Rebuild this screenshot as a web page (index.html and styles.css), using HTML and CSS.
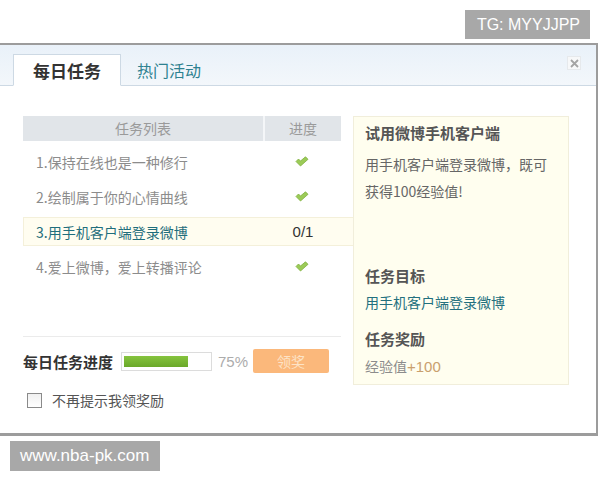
FILE: index.html
```html
<!DOCTYPE html>
<html lang="zh-CN">
<head>
<meta charset="utf-8">
<title>每日任务</title>
<link rel="stylesheet" href="styles.css">
</head>
<body>
<div class="top">
  <div class="tag">TG: MYYJJPP</div>
</div>
<div class="dialog">
  <div class="head">
    <div class="tab active">每日任务</div>
    <div class="tab">热门活动</div>
    <div class="close">
      <svg width="9" height="9" viewBox="0 0 9 9"><path d="M1 1 L8 8 M8 1 L1 8" stroke="#a4a4a4" stroke-width="1.8" fill="none"/></svg>
    </div>
  </div>
  <div class="body">
    <div class="left">
      <div class="thead">
        <div class="c-name">任务列表</div>
        <div class="c-prog">进度</div>
      </div>
      <div class="row">
        <div class="c-name">1.保持在线也是一种修行</div>
        <div class="c-prog"><svg class="ok" width="14" height="11" viewBox="0 0 14 11"><path d="M1 5.5 L3.5 3 L5.5 5 L10.5 0.8 L13 3.3 L5.5 10 Z" fill="#9bcb57" stroke="#7fae3d" stroke-width="0.8" stroke-linejoin="round"/></svg></div>
      </div>
      <div class="row">
        <div class="c-name">2.绘制属于你的心情曲线</div>
        <div class="c-prog"><svg class="ok" width="14" height="11" viewBox="0 0 14 11"><path d="M1 5.5 L3.5 3 L5.5 5 L10.5 0.8 L13 3.3 L5.5 10 Z" fill="#9bcb57" stroke="#7fae3d" stroke-width="0.8" stroke-linejoin="round"/></svg></div>
      </div>
      <div class="row current">
        <div class="c-name">3.用手机客户端登录微博</div>
        <div class="c-prog count">0/1</div>
      </div>
      <div class="row">
        <div class="c-name">4.爱上微博，爱上转播评论</div>
        <div class="c-prog"><svg class="ok" width="14" height="11" viewBox="0 0 14 11"><path d="M1 5.5 L3.5 3 L5.5 5 L10.5 0.8 L13 3.3 L5.5 10 Z" fill="#9bcb57" stroke="#7fae3d" stroke-width="0.8" stroke-linejoin="round"/></svg></div>
      </div>
      <div class="sep"></div>
      <div class="progress">
        <span class="plabel">每日任务进度</span>
        <div class="bar"><div class="fill" style="width:75%"></div></div>
        <span class="pct">75%</span>
        <div class="btn">领奖</div>
      </div>
      <label class="opt">
        <span class="box"></span>
        <span>不再提示我领奖励</span>
      </label>
    </div>
    <div class="panel">
      <div class="ptitle">试用微博手机客户端</div>
      <div class="pdesc">用手机客户端登录微博，既可<br>获得100经验值!</div>
      <div class="phead goal">任务目标</div>
      <div class="plink">用手机客户端登录微博</div>
      <div class="phead reward">任务奖励</div>
      <div class="ptext">经验值<span class="plus">+100</span></div>
    </div>
  </div>
</div>
<div class="bottom">
  <div class="tag site">www.nba-pk.com</div>
</div>
</body>
</html>
```
FILE: styles.css
```css
html, body {
  margin: 0;
  padding: 0;
  background: #fff;
}
body {
  width: 600px;
  height: 480px;
  overflow: hidden;
  font-family: "Noto Sans CJK SC", "Liberation Sans", sans-serif;
  color: #666;
}
.top {
  height: 43px;
  display: flex;
  justify-content: flex-end;
  align-items: flex-start;
  padding-right: 10px;
}
.tag {
  margin-top: 10px;
  background: #a8a8a8;
  color: #fff;
  font-family: "Liberation Sans", Arial, sans-serif;
  font-size: 16px;
  height: 29px;
  line-height: 29px;
  padding: 0 10px 0 12px;
}
.dialog {
  margin-left: -2px;
  width: 596px;
  height: 388px;
  border: 2px solid #9c9c9c;
  border-bottom-width: 3px;
  background: #fff;
}
.head {
  height: 40px;
  border-bottom: 1px solid #cdd9e4;
  background: linear-gradient(#e9f1f9, #f3f7fb);
  display: flex;
  align-items: flex-end;
  padding-left: 13px;
}
.tab {
  height: 32px;
  line-height: 32px;
  margin-bottom: -1px;
  font-size: 16px;
  color: #2e8190;
  padding: 0 17px 0 16px;
}
.tab.active {
  width: 108px;
  box-sizing: border-box;
  padding: 0;
  text-align: center;
  background: #fff;
  border: 1px solid #cdd9e4;
  border-bottom-color: #fff;
  font-weight: bold;
  color: #333;
  font-size: 17px;
}
.close {
  align-self: flex-start;
  margin: 11px 15px 0 auto;
  width: 14px;
  height: 14px;
  box-sizing: border-box;
  border: 1px solid #e6e9ec;
  background: #f7f8f9;
  display: flex;
  align-items: center;
  justify-content: center;
}
.body {
  display: flex;
  padding: 30px 0 0 23px;
}
.left {
  width: 330px;
  font-size: 14px;
}
.thead {
  width: 318px;
  height: 25px;
  display: grid;
  grid-template-columns: 240px 78px;
  background: #e1e5e9;
  color: #9a9a9a;
  line-height: 25px;
  text-align: center;
}
.thead .c-prog {
  border-left: 2px solid #f4f6f8;
}
.row {
  height: 29px;
  margin-top: 6px;
  display: grid;
  grid-template-columns: 240px 78px;
  align-items: center;
  color: #8c8c8c;
  box-sizing: border-box;
}
.row .c-name {
  padding-left: 13px;
}
.row .c-prog {
  display: flex;
  justify-content: center;
  align-items: center;
}
.row.current {
  width: 330px;
  background: #fffdf0;
  border: 1px solid #f4f0da;
  border-right: none;
  color: #1f6e7c;
}
.row.current .c-name {
  padding-left: 12px;
}
.count {
  color: #333;
  font-family: "Liberation Sans", Arial, sans-serif;
  font-size: 15px;
}
.sep {
  width: 318px;
  height: 1px;
  background: #ebebeb;
  margin-top: 55px;
}
.progress {
  margin-top: 12px;
  height: 24px;
  display: flex;
  align-items: center;
}
.plabel {
  font-weight: bold;
  color: #333;
  font-size: 15px;
  width: 98px;
}
.bar {
  width: 91px;
  height: 19px;
  box-sizing: border-box;
  border: 1px solid #dcdcdc;
  padding: 3px 2px;
  background: #fff;
}
.fill {
  height: 11px;
  max-width: 65px;
  background: linear-gradient(#86c43e, #6aa82a);
}
.pct {
  font-family: "Liberation Sans", Arial, sans-serif;
  color: #acacac;
  font-size: 15px;
  margin-left: 6px;
  width: 35px;
}
.btn {
  width: 76px;
  height: 24px;
  line-height: 24px;
  text-align: center;
  background: #fbb87b;
  color: #fde3c6;
  font-size: 14px;
  border-radius: 2px;
}
.opt {
  margin-top: 19px;
  margin-left: 4px;
  display: flex;
  align-items: center;
  gap: 10px;
  height: 16px;
  color: #555;
  font-size: 14px;
}
.box {
  width: 15px;
  height: 15px;
  box-sizing: border-box;
  border: 1px solid #8a8a8a;
  background: linear-gradient(#f0f0f0, #fff);
}
.panel {
  width: 216px;
  height: 269px;
  box-sizing: border-box;
  background: #fffeef;
  border: 1px solid #f1eedb;
  padding: 6px 10px 0 11px;
}
.ptitle {
  font-weight: bold;
  color: #555;
  font-size: 15px;
  line-height: 20px;
}
.pdesc {
  margin-top: 8px;
  font-size: 14px;
  line-height: 27px;
  color: #666;
}
.phead {
  font-weight: bold;
  color: #555;
  font-size: 15px;
  line-height: 24px;
}
.phead.goal {
  margin-top: 59px;
}
.phead.reward {
  margin-top: 13px;
}
.plink {
  font-size: 14px;
  line-height: 24px;
  margin-top: 2px;
  color: #23707e;
}
.ptext {
  font-size: 14px;
  line-height: 24px;
  margin-top: 3px;
  color: #8c8c8c;
}
.plus {
  color: #c9a06e;
  font-family: "Liberation Sans", Arial, sans-serif;
  font-size: 15px;
}
.bottom {
  padding: 5px 0 0 10px;
}
.tag.site {
  display: inline-block;
  margin-top: 0;
  height: 30px;
  line-height: 30px;
  font-size: 17px;
  padding: 0 10px;
  width: 130px;
}
```
